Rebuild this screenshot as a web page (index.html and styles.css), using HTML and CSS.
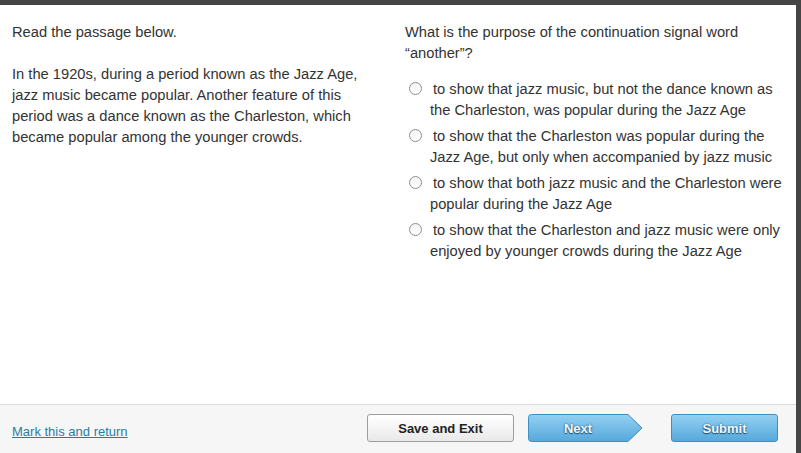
FILE: index.html
```html
<!DOCTYPE html>
<html>
<head>
<meta charset="utf-8">
<link rel="stylesheet" href="styles.css">
</head>
<body>
<div class="frame">
  <main class="content">
    <section class="passage">
      <p>Read the passage below.</p>
      <p>In the 1920s, during a period known as the Jazz Age, jazz music became popular. Another feature of this period was a dance known as the Charleston, which became popular among the younger crowds.</p>
    </section>
    <section class="question">
      <p class="prompt">What is the purpose of the continuation signal word “another”?</p>
      <div class="options">
        <div class="option"><span class="radio"></span>to show that jazz music, but not the dance known as the Charleston, was popular during the Jazz Age</div>
        <div class="option"><span class="radio"></span>to show that the Charleston was popular during the Jazz Age, but only when accompanied by jazz music</div>
        <div class="option"><span class="radio"></span>to show that both jazz music and the Charleston were popular during the Jazz Age</div>
        <div class="option"><span class="radio"></span>to show that the Charleston and jazz music were only enjoyed by younger crowds during the Jazz Age</div>
      </div>
    </section>
  </main>
  <footer class="footer">
    <a class="mark" href="#">Mark this and return</a>
    <button class="btn btn-save">Save and Exit</button>
    <button class="btn-next">
      <svg class="next-shape" width="115" height="28" viewBox="0 0 115 28">
        <defs>
          <linearGradient id="ng" x1="0" y1="0" x2="0" y2="1">
            <stop offset="0" stop-color="#93d0f2"/>
            <stop offset="1" stop-color="#55a8dc"/>
          </linearGradient>
        </defs>
        <path d="M3.5,0.5 H100 L114,14 L100,27.5 H3.5 Q0.5,27.5 0.5,24.5 V3.5 Q0.5,0.5 3.5,0.5 Z" fill="url(#ng)" stroke="#3f8dc2"/>
      </svg>
      <span class="next-label">Next</span>
    </button>
    <button class="btn btn-submit">Submit</button>
  </footer>
</div>
</body>
</html>
```

FILE: styles.css
```css
html, body {
  margin: 0;
  padding: 0;
  background: #fff;
}

.frame {
  width: 801px;
  height: 453px;
  box-sizing: border-box;
  border-top: 5px solid #454545;
  border-right: 5px solid #454545;
  display: flex;
  flex-direction: column;
  font-family: "Liberation Sans", Arial, sans-serif;
  color: #333;
}

.content {
  flex: 1;
  display: grid;
  grid-template-columns: 393px 1fr;
}

.passage {
  padding: 17px 20px 0 12px;
  font-size: 14.7px;
  line-height: 21px;
}

.passage p {
  margin: 0 0 21px 0;
}

.question {
  padding: 17px 11px 0 12px;
  font-size: 14.7px;
  line-height: 21px;
}

.prompt {
  margin: 0 0 15px 0;
}

.options {
  display: flex;
  flex-direction: column;
  gap: 5px;
}

.option {
  padding-left: 25px;
  text-indent: -21px;
}

.radio {
  display: inline-block;
  width: 11px;
  height: 11px;
  border: 1px solid #8f8f8f;
  border-radius: 50%;
  background: linear-gradient(#f4f4f4, #ffffff);
  vertical-align: -1px;
  margin-right: 11px;
  text-indent: 0;
}

.footer {
  height: 49px;
  box-sizing: border-box;
  border-top: 1px solid #d9d9d9;
  background: #f6f6f6;
  display: flex;
  align-items: center;
  padding: 0 18px 2px 12px;
}

.mark {
  font-size: 13px;
  color: #1f7ea4;
  text-decoration: underline;
  margin-right: auto;
  padding-top: 7px;
}

.btn {
  height: 28px;
  box-sizing: border-box;
  border-radius: 3px;
  font-family: "Liberation Sans", Arial, sans-serif;
  font-size: 13px;
  font-weight: bold;
  padding: 0;
  cursor: pointer;
}

.btn-save {
  width: 147px;
  border: 1px solid #9d9d9d;
  background: linear-gradient(#ffffff, #e9e9e9);
  color: #222;
}

.btn-next {
  position: relative;
  width: 115px;
  height: 28px;
  margin-left: 14px;
  padding: 0;
  border: none;
  background: none;
  cursor: pointer;
}

.next-shape {
  position: absolute;
  left: 0;
  top: 0;
}

.next-label {
  position: relative;
  display: block;
  width: 100px;
  text-align: center;
  font-family: "Liberation Sans", Arial, sans-serif;
  font-size: 13px;
  font-weight: bold;
  color: #f2f8fc;
  text-shadow: 0 0 2px #1f4f73, 0 1px 1px #1f4f73;
}

.btn-submit {
  width: 107px;
  margin-left: 28px;
  border: 1px solid #3f8dc2;
  background: linear-gradient(#93d0f2, #55a8dc);
  color: #f2f8fc;
  text-shadow: 0 0 2px #1f4f73, 0 1px 1px #1f4f73;
}
```
